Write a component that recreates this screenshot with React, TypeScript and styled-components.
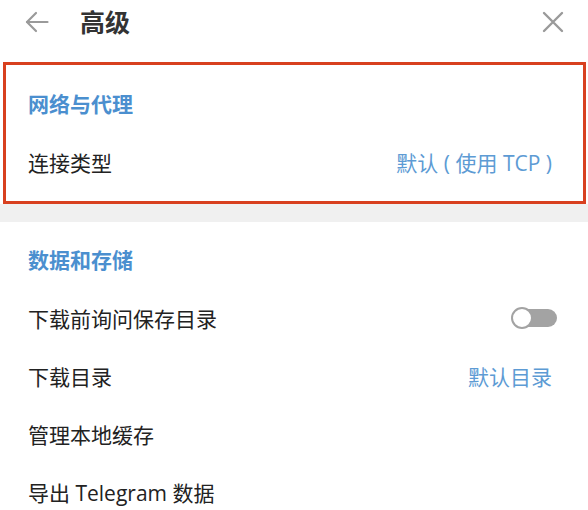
import styled, { createGlobalStyle } from "styled-components";

const GlobalStyle = createGlobalStyle`
  html, body {
    margin: 0;
    padding: 0;
    background: #ffffff;
  }
  body {
    font-family: "Open Sans", "Noto Sans CJK SC", sans-serif;
    -webkit-font-smoothing: antialiased;
  }
`;

const Page = styled.div`
  width: 588px;
  height: 510px;
  overflow: hidden;
  background: #fff;
`;

const Header = styled.header`
  display: flex;
  align-items: center;
  height: 44px;
  padding: 0 24px 0 25px;
  margin-bottom: 18px;
`;

const IconButton = styled.span`
  display: flex;
  align-items: center;
  justify-content: center;
  color: #9a9a9a;
`;

const Title = styled.h1`
  flex: 1;
  margin: 0 0 0 31px;
  font-size: 25px;
  font-weight: 700;
  color: #333;
  line-height: 32px;
`;

const Section = styled.section<{ $highlight?: boolean }>`
  margin: 0 ${(p) => (p.$highlight ? "2px" : "0")} 0 ${(p) => (p.$highlight ? "3px" : "0")};
  border: ${(p) => (p.$highlight ? "3px solid #d8401f" : "none")};
  padding: ${(p) => (p.$highlight ? "25px 0 10px" : "24px 0 0")};
`;

const SectionTitle = styled.h2<{ $highlight?: boolean }>`
  margin: 0 0 15px;
  padding-left: ${(p) => (p.$highlight ? "22px" : "28px")};
  font-size: 21px;
  font-weight: 700;
  line-height: 28px;
  color: #4b8fcf;
`;

const Row = styled.div<{ $highlight?: boolean }>`
  display: flex;
  align-items: center;
  justify-content: space-between;
  height: 58px;
  padding: 0 ${(p) => (p.$highlight ? "31px" : "36px")} 0 ${(p) => (p.$highlight ? "22px" : "28px")};
`;

const Label = styled.span`
  font-size: 21px;
  color: #222;
`;

const Value = styled.span`
  font-size: 21px;
  color: #5d9bd4;
`;

const Separator = styled.div`
  height: 18px;
  background: #f0f0f0;
`;

const Toggle = styled.span`
  position: relative;
  display: block;
  width: 46px;
  height: 22px;
  margin-right: -5px;

  &::before {
    content: "";
    position: absolute;
    left: 8px;
    right: 0;
    top: 2px;
    bottom: 2px;
    border-radius: 9px;
    background: #a3a3a3;
  }

  &::after {
    content: "";
    position: absolute;
    left: 0;
    top: 0;
    width: 18px;
    height: 18px;
    border-radius: 50%;
    background: #fff;
    border: 2px solid #a3a3a3;
  }
`;

function BackArrow() {
  return (
    <svg width="24" height="22" viewBox="0 0 24 22" fill="none" stroke="currentColor" strokeWidth="2.2" strokeLinecap="round" strokeLinejoin="round">
      <path d="M22.5 11H2" />
      <path d="M11 2L2 11l9 9" />
    </svg>
  );
}

function CloseIcon() {
  return (
    <svg width="22" height="22" viewBox="0 0 22 22" fill="none" stroke="currentColor" strokeWidth="2.4" strokeLinecap="round">
      <path d="M2 2l18 18M20 2L2 20" />
    </svg>
  );
}

export default function App() {
  return (
    <Page>
      <GlobalStyle />
      <Header>
        <IconButton>
          <BackArrow />
        </IconButton>
        <Title>高级</Title>
        <IconButton>
          <CloseIcon />
        </IconButton>
      </Header>

      <Section $highlight>
        <SectionTitle $highlight>网络与代理</SectionTitle>
        <Row $highlight>
          <Label>连接类型</Label>
          <Value>默认 ( 使用 TCP )</Value>
        </Row>
      </Section>

      <Separator />

      <Section>
        <SectionTitle>数据和存储</SectionTitle>
        <Row>
          <Label>下载前询问保存目录</Label>
          <Toggle />
        </Row>
        <Row>
          <Label>下载目录</Label>
          <Value>默认目录</Value>
        </Row>
        <Row>
          <Label>管理本地缓存</Label>
        </Row>
        <Row>
          <Label>导出 Telegram 数据</Label>
        </Row>
      </Section>
    </Page>
  );
}
